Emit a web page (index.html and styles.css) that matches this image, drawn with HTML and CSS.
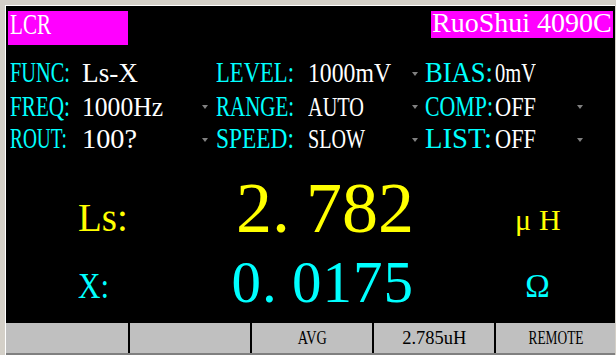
FILE: index.html
```html
<!DOCTYPE html>
<html lang="en">
<head>
  <meta charset="UTF-8">
  <meta name="viewport" content="width=device-width, initial-scale=1.0">
  <title>LCR 4090C</title>
  <link rel="stylesheet" href="styles.css">
</head>
<body>

<div class="screen">
  <div class="topbar">
    <div class="tag tag-mode"><span data-w="41">LCR</span></div>
    <div class="tag tag-model">RuoShui 4090C</div>
  </div>

  <div class="params">
    <span class="lbl" data-w="60">FUNC:</span><span class="val" data-w="56">Ls-X</span><span></span>
    <span class="lbl" data-w="78">LEVEL:</span><span class="val" data-w="83">1000mV</span><span class="arr"></span>
    <span class="lbl" data-w="68">BIAS:</span><span class="val" data-w="41">0mV</span><span></span>

    <span class="lbl" data-w="60">FREQ:</span><span class="val" data-w="81">1000Hz</span><span class="arr"></span>
    <span class="lbl" data-w="78">RANGE:</span><span class="val" data-w="56">AUTO</span><span class="arr"></span>
    <span class="lbl" data-w="68">COMP:</span><span class="val" data-w="41">OFF</span><span class="arr"></span>

    <span class="lbl" data-w="57">ROUT:</span><span class="val" data-w="55">100?</span><span class="arr"></span>
    <span class="lbl" data-w="78">SPEED:</span><span class="val" data-w="57">SLOW</span><span class="arr"></span>
    <span class="lbl" data-w="67">LIST:</span><span class="val" data-w="41">OFF</span><span class="arr"></span>
  </div>

  <div class="meas-row meas-main">
    <span class="m-lbl ls">Ls:</span>
    <span class="m-val big">2<span class="dot">.</span>782</span>
    <span class="m-unit uh"><span class="mu">μ</span>H</span>
  </div>

  <div class="meas-row meas-sub">
    <span class="m-lbl x"><span data-w="31">X:</span></span>
    <span class="m-val small">0<span class="dot">.</span>0175</span>
    <span class="m-unit ohm">Ω</span>
  </div>

  <div class="bar">
    <div class="cell"></div>
    <div class="cell"></div>
    <div class="cell"><span data-w="29">AVG</span></div>
    <div class="cell"><span data-w="64">2.785uH</span></div>
    <div class="cell"><span data-w="55">REMOTE</span></div>
  </div>
</div>

<script>
  // Squeeze each text to the width it has on the instrument screen
  document.fonts.ready.then(() => {
    document.querySelectorAll('[data-w]').forEach(el => {
      const w = el.getBoundingClientRect().width;
      if (w > 0) {
        el.style.transform = 'scaleX(' + (el.dataset.w / w).toFixed(3) + ')';
      }
    });
  });
</script>

</body>
</html>
```

FILE: styles.css
```css
body {
  margin: 0;
  padding: 5px 0 0 5px;
  background-color: #d4d0c8;
  font-family: "Liberation Serif", "Times New Roman", serif;
}

.screen {
  box-sizing: border-box;
  width: 610px;
  height: 350px;
  border-top: 1px solid #ffffff;
  border-left: 1px solid #ffffff;
  background-color: #000000;
  display: flex;
  flex-direction: column;
  overflow: hidden;
}

/* top bar */
.topbar {
  box-sizing: border-box;
  height: 50px;
  padding: 5px 2px 0 2px;
  display: flex;
  justify-content: space-between;
  align-items: flex-start;
}

.tag {
  box-sizing: border-box;
  background-color: #ff00ff;
  color: #ffffff;
  white-space: nowrap;
}

.tag-mode {
  width: 120px;
  height: 34px;
  padding-left: 2px;
  font-size: 29px;
  line-height: 26px;
}

.tag-mode span {
  display: inline-block;
  transform-origin: left;
}

.tag-model {
  width: 182px;
  height: 27px;
  padding-left: 1px;
  font-size: 28px;
  line-height: 24px;
}

/* settings */
.params {
  display: grid;
  grid-template-columns: 72px 120px 14px 92px 104px 13px 70px 82px 1fr;
  grid-template-rows: 34px 32px 33px;
  padding-left: 4px;
  line-height: 33px;
}

.params span {
  justify-self: start;
  white-space: nowrap;
  transform-origin: left;
}

.lbl {
  color: #00ffff;
  font-size: 29px;
}

.val {
  color: #ffffff;
  font-size: 28px;
}

.params .arr {
  align-self: center;
  width: 0;
  height: 0;
  margin-top: 2px;
  border-left: 3px solid transparent;
  border-right: 3px solid transparent;
  border-top: 4px solid #808080;
}

/* readings */
.meas-row {
  display: flex;
  align-items: flex-end;
  padding-left: 72px;
  white-space: nowrap;
}

.meas-main {
  margin-top: 17px;
  color: #ffff00;
}

.meas-sub {
  margin-top: 9px;
  color: #00ffff;
}

.m-lbl {
  width: 150px;
}

.m-lbl span {
  display: inline-block;
  transform-origin: left;
}

.m-val {
  width: 186px;
  text-align: right;
}

.m-unit {
  width: 45px;
  margin-left: 101px;
  text-align: center;
}

.ls {
  font-size: 39px;
  line-height: 52px;
}

.x {
  font-size: 35px;
  line-height: 51px;
}

.big {
  font-size: 72px;
  line-height: 72px;
}

.big .dot {
  display: inline-block;
  width: 34px;
  text-align: left;
}

.small {
  font-size: 59px;
  line-height: 59px;
  letter-spacing: 1px;
}

.small .dot {
  display: inline-block;
  width: 30px;
  text-align: left;
}

.uh {
  font-size: 30px;
  line-height: 48px;
}

.mu {
  margin-right: 8px;
}

.ohm {
  font-size: 33px;
  line-height: 52px;
}

/* status bar */
.bar {
  box-sizing: border-box;
  margin-top: auto;
  height: 32px;
  display: grid;
  grid-template-columns: 122px 122px 122px 122px 1fr;
  background-color: #c0c0c0;
  border-bottom: 2px solid #808080;
}

.cell {
  border-left: 2px solid #000000;
  text-align: center;
  font-size: 18px;
  line-height: 30px;
  color: #000000;
  white-space: nowrap;
}

.cell:first-child {
  border-left: none;
}

.cell span {
  display: inline-block;
}
```
